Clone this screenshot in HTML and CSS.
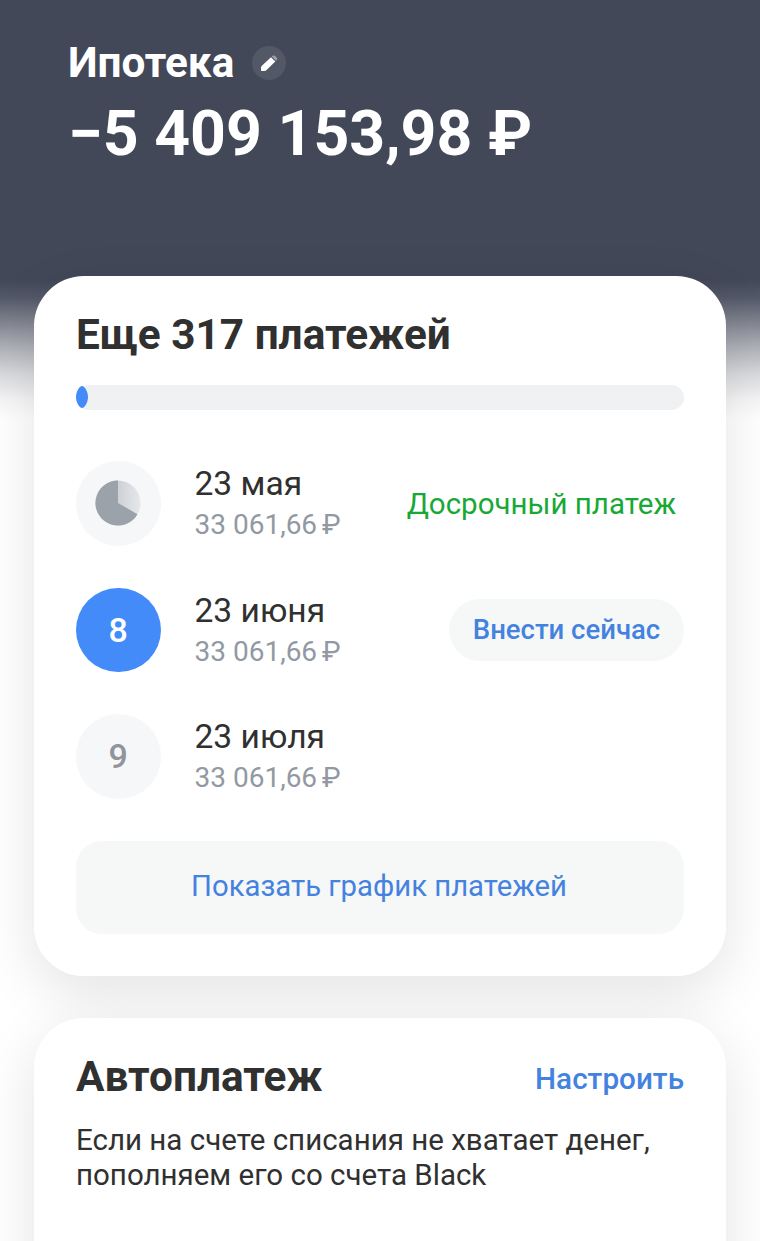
FILE: index.html
```html
<!DOCTYPE html>
<html lang="ru">
<head>
<meta charset="utf-8">
<title>Ипотека</title>
<link rel="stylesheet" href="styles.css">
</head>
<body>
<main class="screen">
  <header class="account">
    <div class="account-name">
      <h1 class="account-title">Ипотека</h1>
      <button class="edit" aria-label="Изменить">
        <svg viewBox="0 0 34 34" width="34" height="34"><path d="M9 24.300v-2.600q0-1.200.9-2L19 11.300l4.300 4.300-8.700 8.500q-.9.900-2.200.9H9.800q-.8 0-.8-.7z" fill="#fff"/><path d="M19.800 10.600l.9-.8q1.200-.8 2.300 0l1.900 1.900q.8 1.100 0 2.200l-.9.900z" fill="#9a9fa9"/></svg>
      </button>
    </div>
    <div class="balance">−5 409 153,98 ₽</div>
  </header>

  <section class="card payments">
    <h2 class="card-title">Еще 317 платежей</h2>
    <div class="progress">
      <svg class="progress-value" viewBox="0 0 12 22" width="12" height="22"><path d="M6 0C8.500 0 12 5.500 12 11S8.500 22 6 22 0 16.500 0 11 3.500 0 6 0z" fill="#428bf9"/></svg>
    </div>
    <ul class="list">
      <li class="row">
        <div class="badge">
          <svg viewBox="0 0 46 46" width="46" height="46">
            <defs><linearGradient id="rest" x1="0" x2="1"><stop offset=".5" stop-color="#cdd1d6"/><stop offset="1" stop-color="#e6e8eb"/></linearGradient></defs>
            <circle cx="23" cy="23" r="22.500" fill="url(#rest)"/><path d="M23 23V.5A22.500 22.500 0 1 0 42.500 34.200z" fill="#9ba2aa"/>
          </svg>
        </div>
        <div class="info"><div class="date">23 мая</div><div class="sum">33 061,66<span class="currency">₽</span></div></div>
        <a class="early">Досрочный платеж</a>
      </li>
      <li class="row">
        <div class="badge badge-active">8</div>
        <div class="info"><div class="date">23 июня</div><div class="sum">33 061,66<span class="currency">₽</span></div></div>
        <button class="pay">Внести сейчас</button>
      </li>
      <li class="row">
        <div class="badge">9</div>
        <div class="info"><div class="date">23 июля</div><div class="sum">33 061,66<span class="currency">₽</span></div></div>
      </li>
    </ul>
    <button class="schedule">Показать график платежей</button>
  </section>

  <section class="card autopay">
    <div class="autopay-head">
      <h2 class="card-title">Автоплатеж</h2>
      <a class="setup">Настроить</a>
    </div>
    <p class="note">Если на счете списания не хватает денег,<br>пополняем его со счета Black</p>
  </section>
</main>
</body>
</html>
```
FILE: styles.css
```css
* { box-sizing: border-box; }
body { margin: 0; font-family: Roboto, sans-serif; color: #303030; background: #fff; }
h1, h2, p, ul { margin: 0; padding: 0; }
button { border: 0; padding: 0; font: inherit; }
.screen {
  height: 1241px; overflow: hidden; padding: 40px 34px 0; isolation: isolate;
  background: linear-gradient(#434859 0, #434859 280px, #545969 298px, #868994 325px, #b0b2b9 348px, #dadbde 375px, #f5f5f6 400px, #fff 420px);
}
.account { height: 236px; padding-left: 34px; color: #fff; }
.account-name { display: flex; align-items: center; gap: 18px; height: 46px; }
.account-title { font-size: 42.300px; line-height: 46px; font-weight: 700; }
.edit { width: 34px; height: 34px; border-radius: 50%; background: #535867; }
.edit svg { display: block; }
.balance { margin-top: 12px; font-size: 62.600px; line-height: 72px; font-weight: 700; white-space: nowrap; }
.card { position: relative; background: #fff; border-radius: 50px; padding: 0 42px; }
/* Shadows stay beneath every card so that neighbours do not tint each other */
.card::before { content: ""; position: absolute; inset: 0; z-index: -1; border-radius: inherit; box-shadow: 0 14px 56px rgba(0,0,0,.11); }
.payments::before { box-shadow: 0 18px 56px rgba(0,0,0,.11); }
.payments { height: 700px; padding-top: 34px; }
.card-title { font-size: 42.350px; line-height: 50px; font-weight: 700; white-space: nowrap; }
.progress { height: 25px; margin-top: 25px; border-radius: 13px; background: #eff1f3; padding-top: 1px; }
.progress-value { display: block; }
.list { list-style: none; margin-top: 51px; display: grid; gap: 42px; }
.row { display: flex; align-items: center; height: 84.500px; white-space: nowrap; }
.badge { width: 84.500px; height: 84.500px; border-radius: 50%; background: #f6f7f8; display: flex; align-items: center; justify-content: center; font-size: 34px; font-weight: 500; color: #90949b; }
.badge-active { background: #428bf9; color: #fff; }
.info { margin-left: 34px; flex: 1; padding-top: 2px; }
.date { font-size: 33.600px; line-height: 41px; }
.sum { font-size: 28px; line-height: 41px; color: #9299a2; }
.currency { margin-left: 5px; }
.early { font-size: 29.500px; color: #18a836; margin-right: 8px; padding-top: 1px; }
.pay { width: 235px; height: 62px; border-radius: 32px; background: #f6f8f8; color: #4482df; font-size: 27.500px; font-weight: 500; }
.schedule { display: block; width: 100%; height: 93px; margin-top: 42px; padding: 0 2px 2px 0; border-radius: 26px; background: #f6f8f8; color: #4482df; font-size: 29.300px; }
.autopay { margin-top: 42px; height: 300px; padding-top: 34px; }
.autopay-head { display: flex; justify-content: space-between; align-items: center; }
.setup { font-size: 29.700px; font-weight: 500; color: #4482df; padding-top: 3px; }
.note { margin-top: 21px; font-size: 29.500px; line-height: 35px; white-space: nowrap; }
```
